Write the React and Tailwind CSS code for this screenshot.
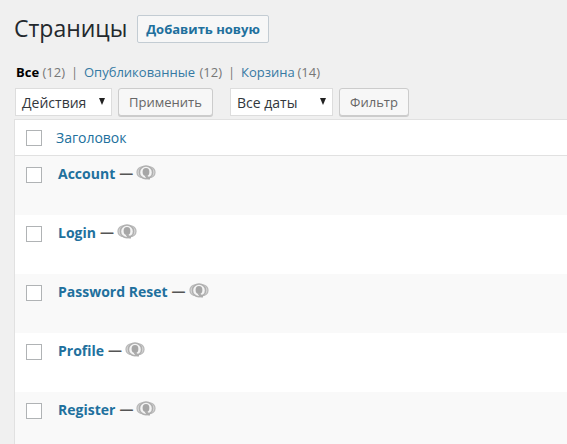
import { useState } from 'react';

const pages = ['Account', 'Login', 'Password Reset', 'Profile', 'Register'];

const filters = [
  { label: 'Все', count: 12, width: 'w-[49px]' },
  { label: 'Опубликованные', count: 12, width: 'w-[138px]' },
  { label: 'Корзина', count: 14, width: 'w-[79px]' },
];

function UserIcon() {
  return (
    <svg viewBox="0 0 20 16" className="w-5 h-4 mt-px shrink-0" fill="none">
      <ellipse cx="6.4" cy="7.3" rx="5.4" ry="5.4" fill="#dcdcdc" stroke="#bababa" strokeWidth="1.3" />
      <ellipse cx="13.6" cy="7.3" rx="5.4" ry="5.4" fill="#dcdcdc" stroke="#bababa" strokeWidth="1.3" />
      <ellipse cx="10" cy="7.4" rx="6.6" ry="6.4" fill="#f4f4f4" stroke="#b0b0b0" strokeWidth="1.6" />
      <ellipse cx="10" cy="7" rx="3.4" ry="4" fill="#a6a6a6" />
      <path d="M9 10h2.2l.8 1.4 2.4.6-.8 2.7-2.8-.6L9 11.6z" fill="#acacac" />
    </svg>
  );
}

function Checkbox({ checked, onChange }) {
  return (
    <input
      type="checkbox"
      checked={checked}
      onChange={onChange}
      className="appearance-none block w-4 h-4 shrink-0 bg-white border border-[#b0b3b5] checked:bg-[#1e73a0]"
    />
  );
}

function Dropdown({ label, className }) {
  return (
    <button type="button" className={`flex items-center justify-between h-[28px] pl-[6px] pr-[6px] bg-white border border-[#ddd] text-[#32373c] ${className}`}>
      <span>{label}</span>
      <svg viewBox="0 0 6 7" className="w-[6px] h-[7px] mb-px" fill="#222">
        <path d="M0 0h6L3 7z" />
      </svg>
    </button>
  );
}

function Button({ children, className }) {
  return (
    <button type="button" className={`h-[28px] pt-px bg-[#f7f7f7] border border-[#ccc] rounded-[3px] shadow-[0_1px_0_#ccc] text-[13px] text-[#666] ${className}`}>
      {children}
    </button>
  );
}

export default function App() {
  const [selected, setSelected] = useState([]);

  const toggle = (page) => {
    setSelected(selected.includes(page) ? selected.filter((p) => p !== page) : [...selected, page]);
  };

  const toggleAll = () => {
    setSelected(selected.length === pages.length ? [] : pages);
  };

  return (
    <div className="h-[444px] overflow-hidden bg-[#f0f0f0] pl-[14px] font-['Open_Sans',sans-serif] text-[14px] text-[#555] whitespace-nowrap">
      {/* Title */}
      <div className="flex items-start h-[63px] pt-[15px]">
        <h1 className="w-[123px] -mt-px text-[23px] leading-[29px] text-[#23282d]">Страницы</h1>
        <button type="button" className="w-[132px] h-[28px] pt-px bg-[#f7f7f7] border border-[#c3ccd3] rounded-[2px] text-[13px] font-bold text-[#21709d]">
          Добавить новую
        </button>
      </div>

      {/* Status filters */}
      <ul className="flex h-[25px] pl-[2px] text-[13px] leading-[18px]">
        {filters.map((filter, i) => (
          <li key={filter.label} className="flex">
            {i > 0 && <span className="w-[19px] pl-[6px] text-[#777]">|</span>}
            <a href="#" className={`flex justify-between ${filter.width} ${i === 0 ? 'font-bold text-black' : 'text-[#3579a3]'}`}>
              {filter.label} <span className="font-normal text-[#777]">({filter.count})</span>
            </a>
          </li>
        ))}
      </ul>

      {/* Bulk actions */}
      <div className="flex h-[31px] pl-px">
        <Dropdown label="Действия" className="w-[97px]" />
        <Button className="w-[95px] ml-[6px]">Применить</Button>
        <Dropdown label="Все даты" className="w-[103px] ml-[17px]" />
        <Button className="w-[70px] ml-[6px]">Фильтр</Button>
      </div>

      {/* Pages list */}
      <div className="bg-white border-t border-l border-[#e1e1e1]">
        <div className="flex items-center gap-[14px] h-[36px] pl-[11px] border-b border-[#e1e1e1]">
          <Checkbox checked={selected.length === pages.length} onChange={toggleAll} />
          <a href="#" className="text-[#21709d]">Заголовок</a>
        </div>
        {pages.map((page) => (
          <div key={page} className="flex h-[59px] pl-[11px] pt-[11px] odd:bg-white even:bg-[#f9f9f9]">
            <Checkbox checked={selected.includes(page)} onChange={() => toggle(page)} />
            <div className="flex h-5 -mt-[3px] ml-4 leading-5 font-bold">
              <a href="#" className="text-[#21709d]">{page}</a>
              <span className="-mt-px ml-1 mr-[3px]">—</span>
              <UserIcon />
            </div>
          </div>
        ))}
      </div>
    </div>
  );
}
